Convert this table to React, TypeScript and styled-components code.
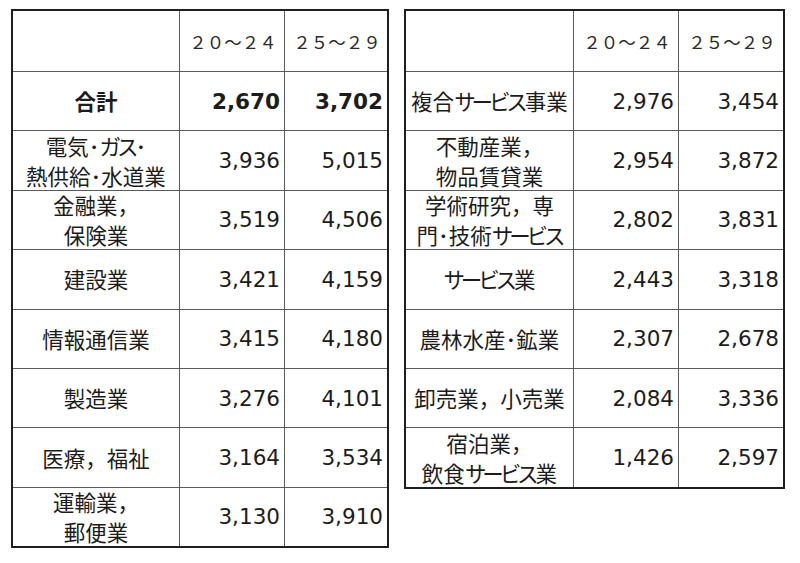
import React from 'react';
import styled, { createGlobalStyle } from 'styled-components';

const GlobalStyle = createGlobalStyle`
  html, body {
    margin: 0;
    padding: 0;
    background: #ffffff;
  }
  body {
    font-family: "Noto Sans CJK JP", sans-serif;
    color: #1c1c1c;
  }
`;

type Row = { label: string[]; a: string; b: string; bold?: boolean };

const leftRows: Row[] = [
  { label: ['合計'], a: '2,670', b: '3,702', bold: true },
  { label: ['電気･ガス･', '熱供給･水道業'], a: '3,936', b: '5,015' },
  { label: ['金融業，', '保険業'], a: '3,519', b: '4,506' },
  { label: ['建設業'], a: '3,421', b: '4,159' },
  { label: ['情報通信業'], a: '3,415', b: '4,180' },
  { label: ['製造業'], a: '3,276', b: '4,101' },
  { label: ['医療，福祉'], a: '3,164', b: '3,534' },
  { label: ['運輸業，', '郵便業'], a: '3,130', b: '3,910' },
];

const rightRows: Row[] = [
  { label: ['複合サービス事業'], a: '2,976', b: '3,454' },
  { label: ['不動産業，', '物品賃貸業'], a: '2,954', b: '3,872' },
  { label: ['学術研究，専', '門･技術サービス'], a: '2,802', b: '3,831' },
  { label: ['サービス業'], a: '2,443', b: '3,318' },
  { label: ['農林水産･鉱業'], a: '2,307', b: '2,678' },
  { label: ['卸売業，小売業'], a: '2,084', b: '3,336' },
  { label: ['宿泊業，', '飲食サービス業'], a: '1,426', b: '2,597' },
];

const Page = styled.div`
  display: flex;
  align-items: flex-start;
  gap: 15px;
  padding: 9px 0 0 11px;
`;

const Sheet = styled.div<{ $cols: string; $rows: number }>`
  display: grid;
  grid-template-columns: ${(p) => p.$cols};
  grid-template-rows: 60px repeat(${(p) => p.$rows}, 58.4px);
  gap: 1px;
  background: #5a5a5a;
  border: 2px solid #1f1f1f;
  box-sizing: border-box;
`;

const Cell = styled.div`
  background: #ffffff;
  display: flex;
  align-items: center;
  min-width: 0;
`;

const HeadCell = styled(Cell)`
  justify-content: center;
  font-size: 17.5px;
  color: #2a2a2a;
  padding-left: 2px;
`;

const LabelCell = styled(Cell)<{ $bold?: boolean }>`
  justify-content: center;
  text-align: center;
  font-size: 21.5px;
  line-height: 30px;
  font-weight: ${(p) => (p.$bold ? 700 : 400)};
  white-space: nowrap;
`;

const NumCell = styled(Cell)<{ $bold?: boolean }>`
  justify-content: flex-end;
  padding-right: 4px;
  font-family: "DejaVu Sans", "Noto Sans CJK JP", sans-serif;
  font-size: 21.5px;
  font-weight: ${(p) => (p.$bold ? 700 : 400)};
`;

// Meiryo UI style narrow katakana
const Kana = styled.span`
  letter-spacing: -0.19em;
  margin-right: 0.05em;
`;

function renderLine(line: string) {
  const parts = line.split(/([\u30A0-\u30FF]+)/).filter(Boolean);
  return parts.map((p, i) =>
    /^[\u30A0-\u30FF]+$/.test(p) ? <Kana key={i}>{p}</Kana> : <React.Fragment key={i}>{p}</React.Fragment>
  );
}

const Table: React.FC<{ rows: Row[]; cols: string }> = ({ rows, cols }) => (
  <Sheet $cols={cols} $rows={rows.length}>
    <HeadCell />
    <HeadCell>２０～２４</HeadCell>
    <HeadCell>２５～２９</HeadCell>
    {rows.map((r, i) => (
      <React.Fragment key={i}>
        <LabelCell $bold={r.bold}>
          <div>
            {r.label.map((l, j) => (
              <div key={j}>{renderLine(l)}</div>
            ))}
          </div>
        </LabelCell>
        <NumCell $bold={r.bold}>{r.a}</NumCell>
        <NumCell $bold={r.bold}>{r.b}</NumCell>
      </React.Fragment>
    ))}
  </Sheet>
);

export default function App() {
  return (
    <>
      <GlobalStyle />
      <Page>
        <Table rows={leftRows} cols="166px 104px 102px" />
        <Table rows={rightRows} cols="167px 104px 104px" />
      </Page>
    </>
  );
}
